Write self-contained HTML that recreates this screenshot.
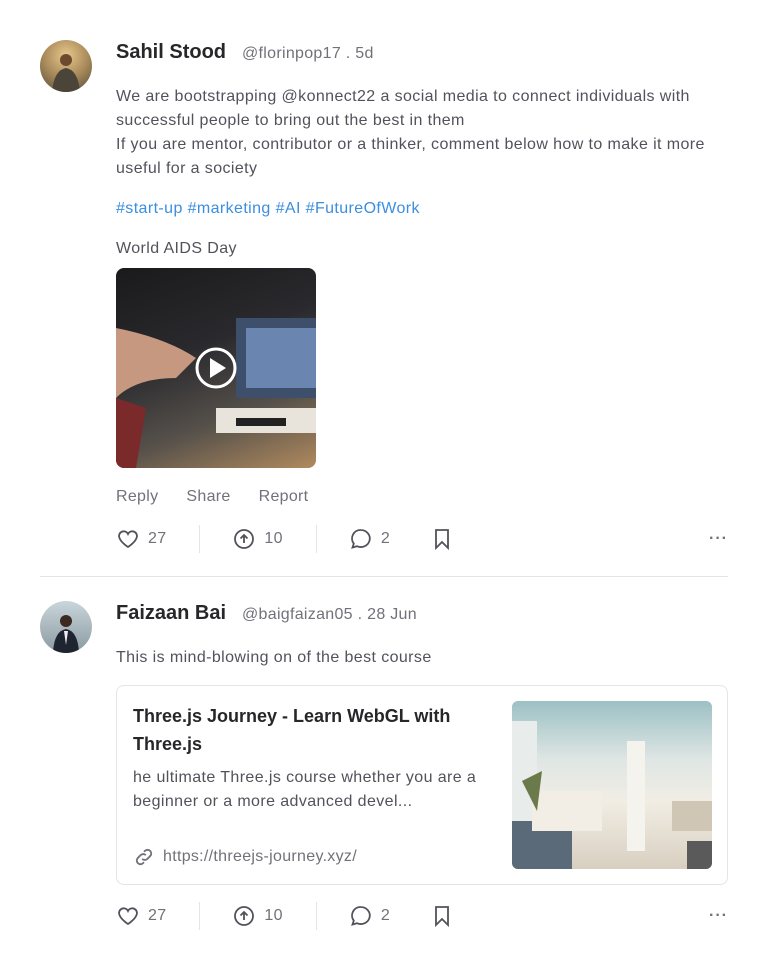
<!DOCTYPE html>
<html><head><meta charset="utf-8"><style>
*{margin:0;padding:0;box-sizing:border-box}
body{width:768px;height:970px;background:#fff;font-family:"Liberation Sans",sans-serif;color:#52525b;position:relative;overflow:hidden}
.a{position:absolute}
.av{width:52px;height:52px;border-radius:50%;overflow:hidden}
.name{font-size:20px;font-weight:bold;color:#27272a}
.h{font-size:16px;color:#71717a;letter-spacing:0.3px}
.t{font-size:16px;line-height:24px;color:#52525b;letter-spacing:0.4px}
.act{font-size:16px;color:#71717a;display:flex;align-items:center;letter-spacing:0.3px}
.sep{width:1px;height:28px;background:#e4e4e7}
</style></head><body>

<div class="a av" style="left:40px;top:40px;background:radial-gradient(circle at 50% 30%,#e8c88a,#a8895a 50%,#4d4a3a)">
<svg width="52" height="52"><circle cx="26" cy="20" r="6" fill="#6b4a30"/><path d="M12 52 Q14 30 26 28 Q38 30 40 52Z" fill="#4a4538"/></svg></div>
<div class="a name" style="left:116px;top:41px">Sahil Stood</div>
<div class="a h" style="left:242px;top:45px">@florinpop17 . 5d</div>
<div class="a t" style="left:116px;top:85px;width:615px">We are bootstrapping @konnect22 a social media to connect individuals with successful people to bring out the best in them<br>If you are mentor, contributor or a thinker, comment below how to make it more useful for a society</div>
<div class="a t" style="left:116px;top:197px;color:#3b8fe0">#start-up #marketing #AI #FutureOfWork</div>
<div class="a t" style="left:116px;top:237px">World AIDS Day</div>
<div class="a" style="left:116px;top:268px;width:200px;height:200px;border-radius:8px;overflow:hidden;background:linear-gradient(160deg,#1a1a1c 0%,#2a2a2e 40%,#55504a 70%,#b08a5e 100%)">
<svg width="200" height="200"><rect x="120" y="50" width="80" height="80" fill="#3d4f6a"/><rect x="130" y="60" width="70" height="60" fill="#6a86b0"/><path d="M0 60 Q50 70 80 90 L60 110 Q20 110 0 130Z" fill="#c79880"/><path d="M0 130 L30 140 L20 200 L0 200Z" fill="#7a2a2a"/><rect x="100" y="140" width="100" height="25" fill="#e8e4dc"/><rect x="120" y="150" width="50" height="8" fill="#222"/><circle cx="100" cy="100" r="19" fill="none" stroke="#fff" stroke-width="3"/><path d="M94 90 L110 100 L94 110Z" fill="#fff"/></svg></div>
<div class="a act" style="left:116px;top:488px;gap:0"><span>Reply</span><span style="margin-left:28px">Share</span><span style="margin-left:28px">Report</span></div>

<div class="a act" style="left:116px;top:525px;height:28px;width:612px">
<svg width="24" height="24" viewBox="0 0 24 24" fill="none" stroke="#52525b" stroke-width="1.8"><path d="M12 20s-7-4.5-8.5-9A4.5 4.5 0 0 1 12 7a4.5 4.5 0 0 1 8.5 4c-1.5 4.5-8.5 9-8.5 9z"/></svg><span style="margin-left:8px">27</span>
<div class="sep" style="margin-left:33px"></div>
<svg style="margin-left:32px" width="24" height="24" viewBox="0 0 24 24" fill="none" stroke="#52525b" stroke-width="1.8"><circle cx="12" cy="12" r="9"/><path d="M12 16V8M8.5 11.5 12 8l3.5 3.5"/></svg><span style="margin-left:8px">10</span>
<div class="sep" style="margin-left:33px"></div>
<svg style="margin-left:32px" width="24" height="24" viewBox="0 0 24 24" fill="none" stroke="#52525b" stroke-width="1.8"><path d="M12 3a9 8.5 0 1 1-4 16.2L3.5 20.5l1.3-3.8A8.5 8.5 0 0 1 12 3z"/></svg><span style="margin-left:8px">2</span>
<svg style="margin-left:40px" width="24" height="24" viewBox="0 0 24 24" fill="none" stroke="#52525b" stroke-width="1.8"><path d="M6 3h12v18l-6-6-6 6z"/></svg>
<span style="margin-left:auto;letter-spacing:1px;font-weight:bold">···</span></div>

<div class="a" style="left:40px;top:576px;width:688px;height:1px;background:#e4e4e7"></div>

<div class="a av" style="left:40px;top:601px;background:linear-gradient(180deg,#c9d6dc,#8a9aa0)">
<svg width="52" height="52"><circle cx="26" cy="20" r="6" fill="#3a2a20"/><path d="M13 52 Q14 30 26 28 Q38 30 39 52Z" fill="#1e2430"/><path d="M24 30 L26 44 L28 30Z" fill="#eee"/></svg></div>
<div class="a name" style="left:116px;top:602px">Faizaan Bai</div>
<div class="a h" style="left:242px;top:606px">@baigfaizan05 . 28 Jun</div>
<div class="a t" style="left:116px;top:646px">This is mind-blowing on of the best course</div>

<div class="a" style="left:116px;top:685px;width:612px;height:200px;border:1px solid #e4e4e7;border-radius:8px">
<div class="a" style="left:16px;top:16px;width:360px;font-size:18px;line-height:28px;font-weight:bold;color:#27272a">Three.js Journey - Learn WebGL with Three.js</div>
<div class="a t" style="left:16px;top:80px;width:370px">he ultimate Three.js course whether you are a beginner or a more advanced devel...</div>
<div class="a act" style="left:16px;top:160px"><svg width="22" height="22" viewBox="0 0 24 24" fill="none" stroke="#71717a" stroke-width="2"><path d="M10 14a4 4 0 0 0 5.7 0l3-3a4 4 0 0 0-5.7-5.7l-1 1M14 10a4 4 0 0 0-5.7 0l-3 3a4 4 0 0 0 5.7 5.7l1-1"/></svg><span style="margin-left:8px">https://threejs-journey.xyz/</span></div>
<div class="a" style="left:395px;top:15px;width:200px;height:168px;border-radius:6px;overflow:hidden;background:linear-gradient(180deg,#9cc0c4 0%,#dfe6e4 35%,#f1ede4 60%,#d8cfc0 100%)">
<svg width="200" height="168"><rect x="115" y="40" width="18" height="110" fill="#f5f3ee"/><rect x="0" y="20" width="25" height="140" fill="#e8ecea"/><path d="M0 120 L60 120 L60 168 L0 168Z" fill="#5a6a78"/><rect x="20" y="90" width="70" height="40" fill="#f2eee6"/><path d="M160 100 L200 100 L200 130 L160 130Z" fill="#cfc6b6"/><path d="M10 80 L30 70 L25 110 Z" fill="#6a7a4a"/><path d="M175 140 L200 140 L200 168 L175 168Z" fill="#5a5a5a"/></svg></div>
</div>

<div class="a act" style="left:116px;top:902px;height:28px;width:612px">
<svg width="24" height="24" viewBox="0 0 24 24" fill="none" stroke="#52525b" stroke-width="1.8"><path d="M12 20s-7-4.5-8.5-9A4.5 4.5 0 0 1 12 7a4.5 4.5 0 0 1 8.5 4c-1.5 4.5-8.5 9-8.5 9z"/></svg><span style="margin-left:8px">27</span>
<div class="sep" style="margin-left:33px"></div>
<svg style="margin-left:32px" width="24" height="24" viewBox="0 0 24 24" fill="none" stroke="#52525b" stroke-width="1.8"><circle cx="12" cy="12" r="9"/><path d="M12 16V8M8.5 11.5 12 8l3.5 3.5"/></svg><span style="margin-left:8px">10</span>
<div class="sep" style="margin-left:33px"></div>
<svg style="margin-left:32px" width="24" height="24" viewBox="0 0 24 24" fill="none" stroke="#52525b" stroke-width="1.8"><path d="M12 3a9 8.5 0 1 1-4 16.2L3.5 20.5l1.3-3.8A8.5 8.5 0 0 1 12 3z"/></svg><span style="margin-left:8px">2</span>
<svg style="margin-left:40px" width="24" height="24" viewBox="0 0 24 24" fill="none" stroke="#52525b" stroke-width="1.8"><path d="M6 3h12v18l-6-6-6 6z"/></svg>
<span style="margin-left:auto;letter-spacing:1px;font-weight:bold">···</span></div>
</body></html>
